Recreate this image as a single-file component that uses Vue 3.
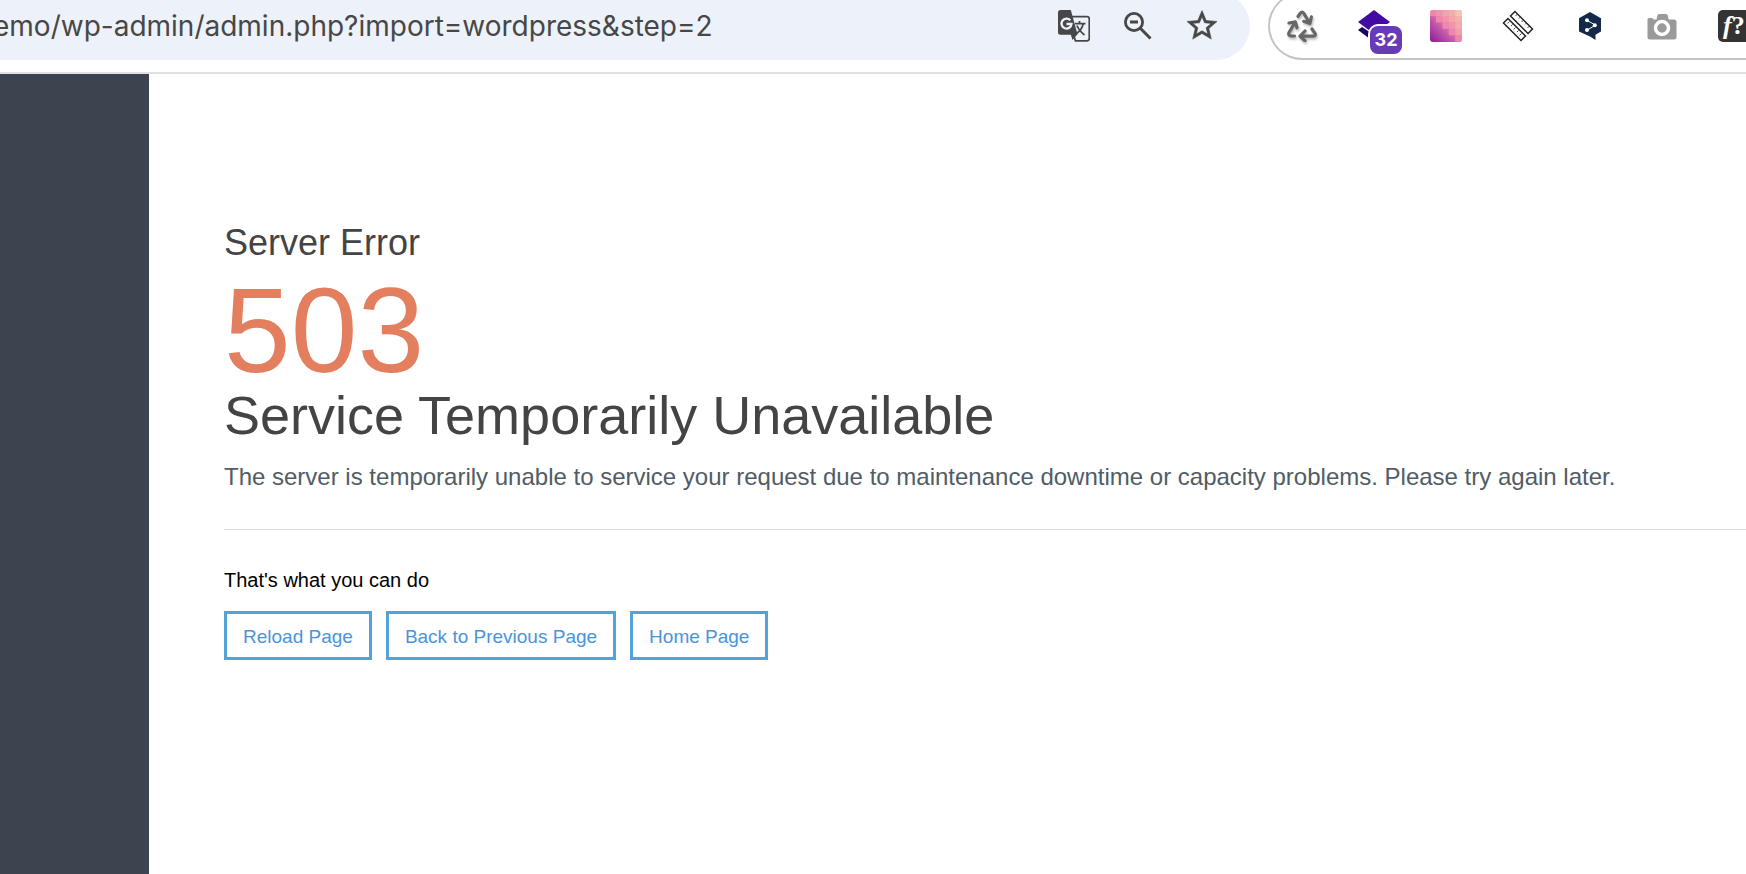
<script setup>
import { ref } from 'vue'

const address = ref('emo/wp-admin/admin.php?import=wordpress&step=2')

// Pixel mosaic of the gradient extension icon, one row per array
const mosaic = [
  ['#ee86ae', '#ef94ac', '#f2a3ac', '#f3ada9', '#f6c4b6', '#fae0d6'],
  ['', '#ee86ae', '#f097ab', '#f2a6aa', '#f3b3ac', '#f6c6b8'],
  ['', '', '#ee86ae', '#f094ab', '#f3ada9', '#f3b3ac'],
  ['', '', '', '#ee86ae', '#f0a0ab', '#f3ada9'],
  ['', '', '', '', '#ee86ae', '#f097ab'],
]

const reload = () => window.location.reload()
const back = () => window.history.back()
</script>

<template>
  <div class="browser">
    <header class="toolbar">
      <div class="omnibox">
        <input v-model="address" class="address" type="text" aria-label="Address" spellcheck="false" />
        <button class="tool" type="button" aria-label="Translate this page">
          <svg viewBox="0 0 32 32">
            <path d="M14 6.7h15a2.3 2.3 0 0 1 2.300 2.300v19.500a2.300 2.300 0 0 1-2.300 2.300H17.500L15 24" fill="none" stroke="#474747" stroke-width="1.800" />
            <path d="M2.500 0h10.300l6.700 24.300-5 5.700-1.600-5.300H2.500A2.500 2.500 0 0 1 0 22.200V2.500A2.500 2.500 0 0 1 2.500 0z" fill="#474747" />
            <path d="M12.300 10.300A5 5 0 1 0 13.500 14H8.500" fill="none" stroke="#edf1f9" stroke-width="2.300" />
            <path d="M17 13.600h10.500M21.500 11v2.600M25.200 13.600c-.8 4.400-3.500 7.700-7 10.200M19 15.500c1.500 4 4.300 7 7.500 9.500" fill="none" stroke="#474747" stroke-width="1.800" />
          </svg>
        </button>
        <button class="tool" type="button" aria-label="Zoom">
          <svg viewBox="0 0 32 32" fill="none" stroke="#474747">
            <circle cx="12" cy="12" r="8.600" stroke-width="2.800" />
            <path d="M8 12h8M18.300 18.300l10.200 10.200" stroke-width="3" />
          </svg>
        </button>
        <button class="tool" type="button" aria-label="Bookmark this tab">
          <svg viewBox="1.33 1.6 21.33 21.33">
            <path d="M22 9.240l-7.190-.62L12 2 9.190 8.630 2 9.240l5.460 4.730L5.820 21 12 17.270 18.180 21l-1.630-7.030L22 9.240zM12 15.400l-3.760 2.270 1-4.280-3.320-2.880 4.380-.38L12 6.100l1.710 4.040 4.380.38-3.320 2.880 1 4.280L12 15.400z" fill="#474747" stroke="#474747" stroke-width=".4" />
          </svg>
        </button>
      </div>

      <nav class="extensions" aria-label="Extensions">
        <button class="tool" type="button" aria-label="Recycle">
          <svg class="shaded" viewBox="0 0 32 32" fill="none" stroke="#666" stroke-width="3.200" stroke-linecap="round" stroke-linejoin="round">
            <path d="M12 6.500l2.300-3.300q1.700-2 3.500 0l5 8.600M17.700 11.300l6.200 2.200 1.500-6.700" />
            <path d="M3 13l6.300-1.200 1.700 6M8.800 12.800L3 22.500q-1.200 3 2.300 3.500h3.200" />
            <path d="M26 19l3 4.300q1.200 2.500-2 2.900H14.500M19 21l-5 5.200 5 4.500" />
          </svg>
        </button>
        <button class="tool" type="button" aria-label="Layers, 32 items">
          <svg viewBox="0 0 32 32">
            <path d="M0 20l4-3 12 8v7z" fill="#1d0462" />
            <path d="M16 0l16 12-16 12L0 12z" fill="#430ba4" />
          </svg>
          <span class="badge">32</span>
        </button>
        <button class="tool" type="button" aria-label="Gradient">
          <svg viewBox="0 0 32 32">
            <defs>
              <linearGradient id="purple" x1="0" y1="1" x2=".65" y2=".35">
                <stop offset="0" stop-color="#861b9c" />
                <stop offset="1" stop-color="#f287b0" />
              </linearGradient>
              <clipPath id="tile"><rect width="32" height="32" rx="3" /></clipPath>
            </defs>
            <g clip-path="url(#tile)">
              <rect width="32" height="32" fill="url(#purple)" />
              <template v-for="(row, y) in mosaic" :key="y">
                <template v-for="(fill, x) in row" :key="x">
                  <rect v-if="fill" :x="x * 6.4 - 0.4" :y="y * 6.4 - 0.4" width="6.500" height="6.500" :fill="fill" />
                </template>
              </template>
            </g>
          </svg>
        </button>
        <button class="tool" type="button" aria-label="Page ruler">
          <svg viewBox="0 0 32 32" fill="#fff" stroke="#222" stroke-width="1.500">
            <path d="M6 8.500L1.500 13 19 30.500l4.500-4.500z" />
            <path d="M13 1.500L8.500 6 26 23.500l4.500-4.500z" />
            <path d="M5.500 13.500l2-2M9 16l1.500-1.500M11.500 19.500l2-2M15 22l1.500-1.500M17.500 25.500l2-2M15.500 4l-2 2M18.500 7L17 8.500M21.500 10l-2 2M24.500 13L23 14.500M27.500 16l-2 2" stroke-width=".8" />
          </svg>
        </button>
        <button class="tool" type="button" aria-label="Translator">
          <svg viewBox="0 0 32 32">
            <path d="M16 2l11 6.200v13.300l-5.500 3.300V30l-5.500-3.500L5 21.500V8.200z" fill="#14284a" />
            <path d="M13 10.300l8.500 4.900-8.500 4.900" fill="none" stroke="#fff" stroke-width="1" />
            <g fill="#fff"><circle cx="13" cy="10.300" r="2" /><circle cx="20.800" cy="15.200" r="2" /><circle cx="13" cy="20.100" r="2" /></g>
          </svg>
        </button>
        <button class="tool" type="button" aria-label="Take screenshot">
          <svg viewBox="0 0 32 32">
            <path d="M3 8h2.500q2 0 2 1.500h3l.8-4q.3-1.500 2-1.500h6.500q1.700 0 2 1.500l.8 4H28q2.500 0 2.500 2.500v15q0 2.500-2.500 2.500H4q-2.500 0-2.500-2.500V9.500Q1.500 8 3 8z" fill="#9a9a9a" />
            <circle cx="16" cy="18" r="6.500" fill="#9a9a9a" stroke="#fff" stroke-width="3.500" />
          </svg>
        </button>
        <button class="tool formula" type="button" aria-label="Font finder"><i>f</i>?</button>
      </nav>
    </header>

    <div class="page">
      <div class="stripe"></div>
      <main class="content">
        <h2 class="kind">Server Error</h2>
        <h1 class="code">503</h1>
        <h2 class="title">Service Temporarily Unavailable</h2>
        <p class="detail">The server is temporarily unable to service your request due to maintenance downtime or capacity problems. Please try again later.</p>
        <hr class="rule" />
        <p class="hint">That's what you can do</p>
        <div class="actions">
          <button class="action" type="button" @click="reload">Reload Page</button>
          <button class="action" type="button" @click="back">Back to Previous Page</button>
          <a class="action" href="/">Home Page</a>
        </div>
      </main>
    </div>
  </div>
</template>

<style>
body {
  margin: 0;
  background: #fff;
}
</style>

<style scoped>
.browser {
  display: flex;
  flex-direction: column;
  min-height: 100vh;
  overflow: hidden;
  font-family: "Liberation Sans", Arial, sans-serif;
}

.toolbar {
  display: flex;
  align-items: flex-end;
  gap: 18px;
  height: 60px;
  padding-bottom: 12px;
  overflow: hidden;
  border-bottom: 2px solid #e1e1e1;
}

.omnibox {
  display: flex;
  flex: 1;
  align-items: center;
  gap: 32px;
  min-width: 0;
  height: 68px;
  margin-left: -7px;
  padding-right: 32px;
  border-radius: 0 34px 34px 0;
  background: #edf1f9;
}

.address {
  flex: 1;
  min-width: 0;
  height: 40px;
  padding: 0;
  border: 0;
  outline: 0;
  background: transparent;
  color: #474747;
  font-family: Inter, Roboto, sans-serif;
  font-size: 28px;
}

.tool {
  position: relative;
  flex: none;
  width: 32px;
  height: 32px;
  padding: 0;
  border: 0;
  background: none;
}

.tool svg {
  display: block;
  width: 32px;
  height: 32px;
}

.shaded {
  filter: drop-shadow(1px 2px 1px #bbb);
}

.extensions {
  display: flex;
  flex: none;
  align-items: center;
  gap: 40px;
  box-sizing: border-box;
  height: 68px;
  margin-right: -4px;
  padding-left: 16px;
  border: 2px solid #c4c4c4;
  border-right: 0;
  border-radius: 34px 0 0 34px;
}

.badge {
  position: absolute;
  top: 16px;
  left: 12px;
  width: 32px;
  height: 28px;
  border-radius: 8px;
  background: #673ab7;
  box-shadow: 0 0 0 2px #fff;
  color: #fff;
  font: bold 18px/28px Inter, sans-serif;
  text-align: center;
}

.formula {
  padding-left: 5px;
  border-radius: 5px;
  background: #333;
  color: #fff;
  font: bold 26px/32px "Liberation Serif", serif;
  text-align: left;
  white-space: nowrap;
}

.page {
  display: flex;
  flex: 1;
}

.stripe {
  flex: none;
  width: 149px;
  background: #3d444f;
}

.content {
  flex: 1;
  min-width: 0;
  padding: 149px 0 80px 75px;
}

.kind,
.code,
.title,
.detail,
.hint {
  margin: 0;
  color: #444;
  font-weight: 400;
}

.kind {
  font-size: 36px;
  line-height: 40px;
}

.code {
  margin-top: 7px;
  color: #e37f5f;
  font-size: 120px;
  line-height: 120px;
}

.title {
  font-size: 54px;
  line-height: 50px;
}

.detail {
  margin-top: 21px;
  color: #505c66;
  font-size: 24px;
  line-height: 32px;
}

.rule {
  height: 1px;
  margin: 36px 0 38px;
  border: 0;
  background: #d9d9d9;
}

.hint {
  color: #000;
  font-size: 20px;
  line-height: 24px;
}

.actions {
  display: flex;
  gap: 14px;
  margin-top: 19px;
}

.action {
  padding: 10px 16px 8px;
  border: 3px solid #51a3db;
  background: #fff;
  color: #4a94dc;
  font-family: inherit;
  font-size: 19px;
  line-height: 25px;
  text-decoration: none;
}
</style>
